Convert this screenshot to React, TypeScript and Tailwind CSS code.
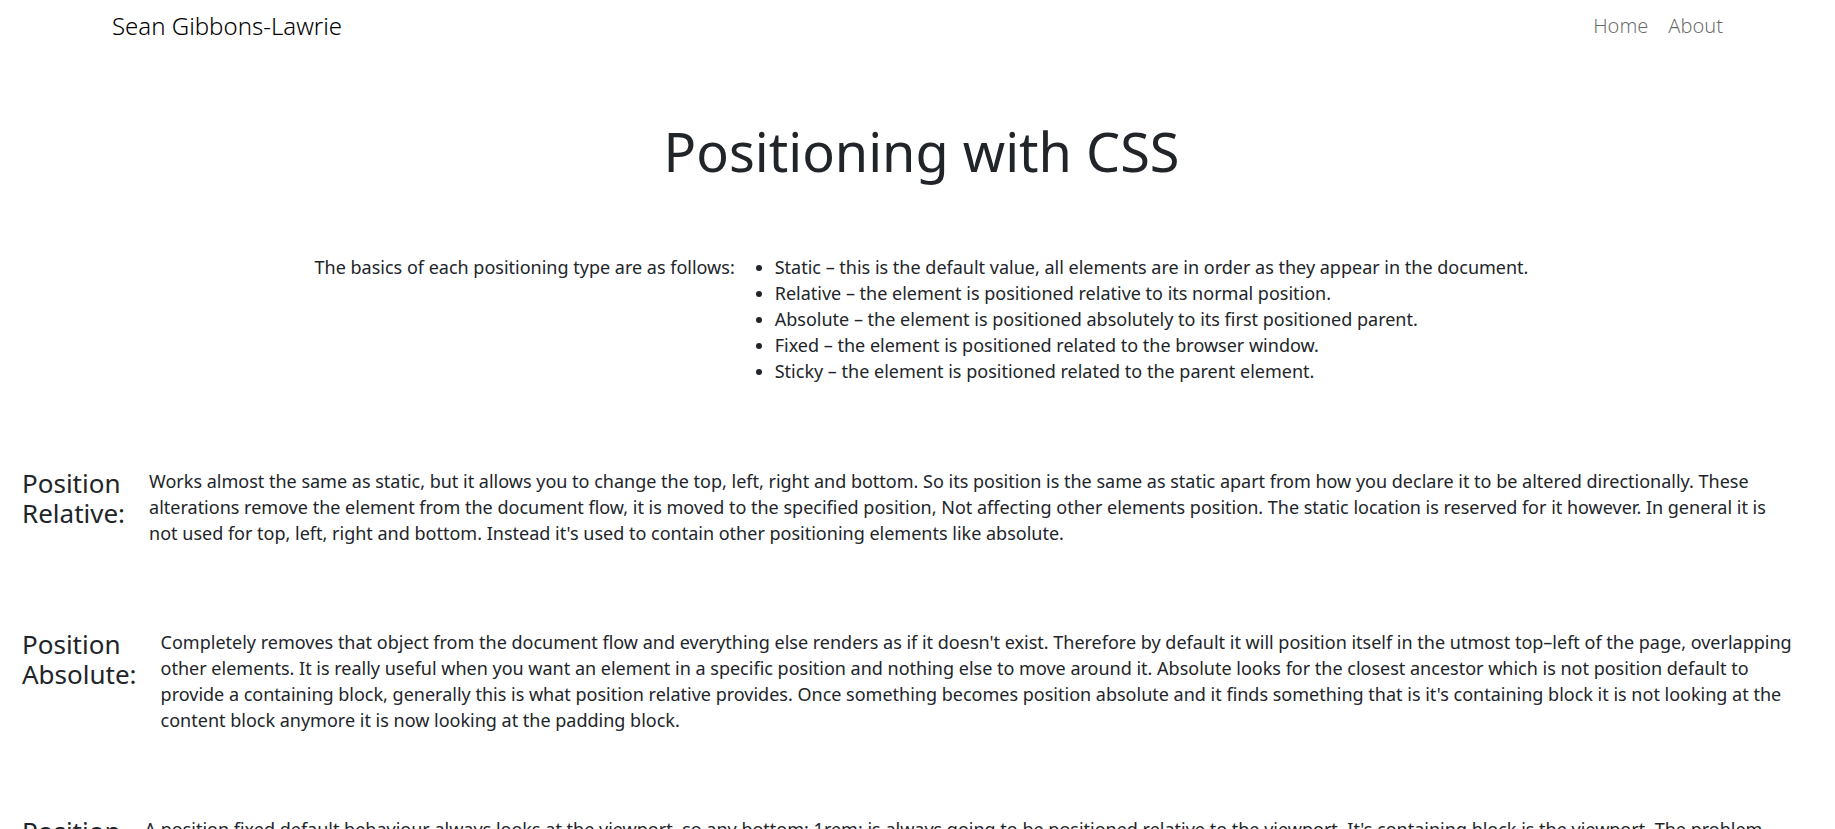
const basics = [
  "Static – this is the default value, all elements are in order as they appear in the document.",
  "Relative – the element is positioned relative to its normal position.",
  "Absolute – the element is positioned absolutely to its first positioned parent.",
  "Fixed – the element is positioned related to the browser window.",
  "Sticky – the element is positioned related to the parent element.",
];

const sections = [
  {
    title: "Position Relative:",
    text: "Works almost the same as static, but it allows you to change the top, left, right and bottom. So its position is the same as static apart from how you declare it to be altered directionally. These alterations remove the element from the document flow, it is moved to the specified position, Not affecting other elements position. The static location is reserved for it however. In general it is not used for top, left, right and bottom. Instead it's used to contain other positioning elements like absolute.",
  },
  {
    title: "Position Absolute:",
    text: "Completely removes that object from the document flow and everything else renders as if it doesn't exist. Therefore by default it will position itself in the utmost top–left of the page, overlapping other elements. It is really useful when you want an element in a specific position and nothing else to move around it. Absolute looks for the closest ancestor which is not position default to provide a containing block, generally this is what position relative provides. Once something becomes position absolute and it finds something that is it's containing block it is not looking at the content block anymore it is now looking at the padding block.",
  },
  {
    title: "Position Fixed:",
    text: "A position fixed default behaviour always looks at the viewport, so any bottom: 1rem; is always going to be positioned relative to the viewport. It's containing block is the viewport. The problem",
  },
];

export default function App() {
  return (
    <div className="h-screen overflow-hidden bg-white font-['Noto_Sans','Open_Sans',sans-serif] text-lg/[26px] text-[#212529]">
      <nav className="flex items-center justify-between px-28 pt-2">
        <a href="#" className="text-2xl/[36px] font-light text-black">
          Sean Gibbons-Lawrie
        </a>
        <div className="flex gap-5 text-xl/[36px] font-light text-black/60">
          <a href="#home">Home</a>
          <a href="#about">About</a>
        </div>
      </nav>
      <main className="pl-2">
        <h1 className="mt-[75px] text-center text-[54px]/[64px]">Positioning with CSS</h1>
        <section className="mt-[71px] flex justify-center gap-10">
          <p>The basics of each positioning type are as follows:</p>
          <ul className="list-disc">
            {basics.map((item) => (
              <li key={item}>{item}</li>
            ))}
          </ul>
        </section>
        <div className="mt-[84px] flex flex-col gap-[83px] pr-10 pl-[14px]">
          {sections.map(({ title, text }) => (
            <section key={title} className="flex gap-6">
              <h2 className="w-min shrink-0 text-[26px]/[30px]">{title}</h2>
              <p>{text}</p>
            </section>
          ))}
        </div>
      </main>
    </div>
  );
}
